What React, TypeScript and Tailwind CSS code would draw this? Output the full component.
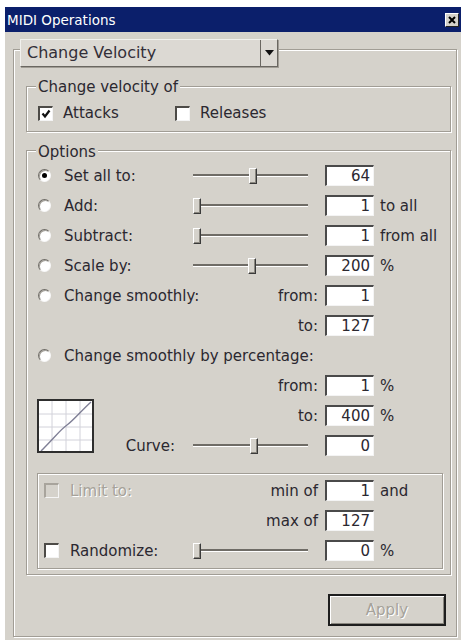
import React from "react";

// Classic Win32-style "MIDI Operations" tool window

const BG = "bg-[#d5d2cb]";

const Radio = ({ on }: { on?: boolean }) => (
  <span className="flex h-[13px] w-[13px] shrink-0 items-center justify-center rounded-full border border-t-[#6e6b65] border-l-[#6e6b65] border-b-[#f7f7f7] border-r-[#f7f7f7] bg-white shadow-[inset_1px_1px_0_#a19e97]">
    {on && <span className="h-[5px] w-[5px] rounded-full bg-black" />}
  </span>
);

const Check = ({ on, disabled }: { on?: boolean; disabled?: boolean }) => (
  <span
    className={
      disabled
        ? "flex h-[15px] w-[15px] shrink-0 items-center justify-center border-t-2 border-l-2 border-b border-r border-t-[#a8a49c] border-l-[#a8a49c] border-b-[#f4f4f4] border-r-[#f4f4f4] bg-[#d5d2cb]"
        : "flex h-[15px] w-[15px] shrink-0 items-center justify-center border-t-2 border-l-2 border-b border-r border-t-[#4d4b47] border-l-[#4d4b47] border-b-[#f4f4f4] border-r-[#f4f4f4] bg-white"
    }
  >
    {on && (
      <svg width="10" height="10" viewBox="0 0 10 10">
        <path d="M1.5 4.5 L4 7.5 L8.5 1.5" stroke="#111" strokeWidth="2.2" fill="none" />
      </svg>
    )}
  </span>
);

const Slider = ({ pos }: { pos: number }) => (
  <div className="relative flex h-[16px] w-[115px] shrink-0 items-center">
    <div className="h-[3px] w-full border-t-2 border-b border-t-[#6f6c66] border-b-white bg-[#9d9a93]" />
    {/* thumb */}
    <div
      className="absolute top-0 h-[16px] w-[8px] border border-t-white border-l-white border-r-[#3a3a3a] border-b-[#3a3a3a] bg-[#d5d2cb] shadow-[inset_-1px_-1px_0_#8a877f]"
      style={{ left: pos }}
    />
  </div>
);

const NumBox = ({ v }: { v: string }) => (
  <div className="flex h-[21px] w-[49px] shrink-0 items-center justify-end border-t-2 border-l-2 border-b border-r border-t-[#4a4a4a] border-l-[#4a4a4a] border-b-[#f4f4f4] border-r-[#f4f4f4] bg-white pr-[3px] leading-none">
    {v}
  </div>
);

const groupCls = "border border-[#a19d95] shadow-[inset_1px_1px_0_#fff,1px_1px_0_#fff]";

const SliderRow = ({
  on,
  label,
  pos,
  value,
  suffix,
}: {
  on?: boolean;
  label: string;
  pos: number;
  value: string;
  suffix?: string;
}) => (
  <div className="flex h-[21px] items-center">
    <div className="flex w-[155px] items-center gap-[13px]">
      <Radio on={on} />
      <span>{label}</span>
    </div>
    <Slider pos={pos} />
    <div className="w-[17px]" />
    <NumBox v={value} />
    {suffix && <span className="ml-[6px]">{suffix}</span>}
  </div>
);

const LabelRow = ({
  left,
  label,
  value,
  suffix,
  width = 287,
}: {
  left?: React.ReactNode;
  label: string;
  value: string;
  suffix?: string;
  width?: number;
}) => (
  <div className="flex h-[21px] items-center">
    <div className="flex items-center" style={{ width }}>
      {left}
      <span className="ml-auto pr-[7px]">{label}</span>
    </div>
    <NumBox v={value} />
    {suffix && <span className="ml-[6px]">{suffix}</span>}
  </div>
);

const CurveGraph = () => (
  <svg width="57" height="54" viewBox="0 0 57 54" className="-ml-[1px] -mt-[6px] shrink-0">
    <rect x="0" y="0" width="57" height="54" fill="#fff" />
    {[15, 29, 43].map((x) => (
      <line key={"v" + x} x1={x} y1="2" x2={x} y2="52" stroke="#d2d2da" strokeWidth="1" />
    ))}
    {[15, 28, 41].map((y) => (
      <line key={"h" + y} x1="2" y1={y} x2="55" y2={y} stroke="#d2d2da" strokeWidth="1" />
    ))}
    <path d="M4 52 C 18 38, 24 30, 30 26 S 44 12, 54 3" stroke="#7f7f96" strokeWidth="1.4" fill="none" />
    <rect x="1" y="1" width="55" height="52" fill="none" stroke="#2e2e2e" strokeWidth="2" />
  </svg>
);

export default function App() {
  return (
    <div className="h-[642px] w-[465px] bg-white pl-[5px] pt-[7px] font-[family-name:'DejaVu_Sans',sans-serif] text-[15px] leading-[18px] text-[#2b2830]">
      <div className={`flex h-[633px] w-[456px] flex-col ${BG}`}>
        {/* Title bar */}
        <div className="flex h-[25px] shrink-0 items-center justify-between bg-[#0b1f6b] pl-[2px] pr-[2px]">
          <span className="text-[13.5px] text-white">MIDI Operations</span>
          <span className="flex h-[14px] w-[14px] items-center justify-center border border-t-white border-l-white border-r-[#222] border-b-[#222] bg-[#d5d2cb]">
            <svg width="8" height="8" viewBox="0 0 8 8">
              <path d="M1 1 L7 7 M7 1 L1 7" stroke="#000" strokeWidth="2" />
            </svg>
          </span>
        </div>

        {/* Outer group with operation dropdown */}
        <div className={`ml-[8px] mt-[17px] flex w-[444px] flex-col ${groupCls}`}>
          <div className="-mt-[11px] ml-[6px] flex h-[28px] w-[258px] items-stretch border border-t-[#f2f1ee] border-l-[#f2f1ee] border-r-[#6a6761] border-b-[#6a6761] bg-[#dcd9d3] shadow-[1px_1px_0_#a19d95]">
            <span className="flex flex-1 items-center pl-[6px] text-[16px] text-[#332f38]">Change Velocity</span>
            <span className="flex w-[17px] items-center justify-center border-l border-l-[#6a6761]">
              <svg width="9" height="6" viewBox="0 0 9 6">
                <path d="M0 0 H9 L4.5 5.5 Z" fill="#111" />
              </svg>
            </span>
          </div>

          {/* Change velocity of */}
          <div className={`ml-[12px] mt-[19px] flex w-[425px] flex-col pb-[8px] ${groupCls}`}>
            <span className={`-mt-[9px] ml-[9px] w-fit px-[2px] ${BG}`}>Change velocity of</span>
            <div className="ml-[11px] mt-[7px] flex h-[20px] items-center">
              <div className="flex w-[137px] items-center gap-[10px]">
                <Check on />
                <span>Attacks</span>
              </div>
              <div className="flex items-center gap-[10px]">
                <Check />
                <span>Releases</span>
              </div>
            </div>
          </div>

          {/* Options */}
          <div className={`ml-[12px] mt-[18px] flex w-[425px] flex-col pb-[5px] ${groupCls}`}>
            <span className={`-mt-[8px] ml-[9px] w-fit px-[2px] ${BG}`}>Options</span>

            <div className="ml-[11px] mt-[4px] flex flex-col gap-[9px]">
              <SliderRow on label="Set all to:" pos={56} value="64" />
              <SliderRow label="Add:" pos={0} value="1" suffix="to all" />
              <SliderRow label="Subtract:" pos={0} value="1" suffix="from all" />
              <SliderRow label="Scale by:" pos={55} value="200" suffix="%" />
              <LabelRow
                left={
                  <span className="flex items-center gap-[13px]">
                    <Radio />
                    <span>Change smoothly:</span>
                  </span>
                }
                label="from:"
                value="1"
              />
              <LabelRow label="to:" value="127" />
              <div className="flex h-[21px] items-center gap-[13px]">
                <Radio />
                <span>Change smoothly by percentage:</span>
              </div>
              <LabelRow label="from:" value="1" suffix="%" />
              <div className="flex items-start">
                <CurveGraph />
                <div className="flex flex-col gap-[9px]">
                  <LabelRow label="to:" value="400" suffix="%" width={231} />
                  <div className="flex h-[21px] items-center">
                    <span className="w-[99px] pr-[18px] text-right">Curve:</span>
                    <Slider pos={57} />
                    <div className="w-[17px]" />
                    <NumBox v="0" />
                  </div>
                </div>
              </div>
            </div>

            {/* Limit / randomize */}
            <div className={`ml-[10px] mt-[17px] flex w-[406px] flex-col gap-[9px] pb-[7px] pt-[6px] ${groupCls}`}>
              <LabelRow
                left={
                  <span className="ml-[6px] flex items-center gap-[11px]">
                    <Check disabled />
                    <span className="text-[#a6a29a] [text-shadow:1px_1px_0_#fff]">Limit to:</span>
                  </span>
                }
                label="min of"
                value="1"
                suffix="and"
              />
              <LabelRow label="max of" value="127" />
              <div className="flex h-[21px] items-center">
                <div className="flex w-[155px] items-center gap-[11px] pl-[6px]">
                  <Check />
                  <span>Randomize:</span>
                </div>
                <Slider pos={0} />
                <div className="w-[17px]" />
                <NumBox v="0" />
                <span className="ml-[6px]">%</span>
              </div>
            </div>
          </div>

          {/* Apply */}
          <div className="mb-[10px] mr-[10px] mt-[19px] flex h-[32px] w-[118px] items-center justify-center self-end border-2 border-[#1e1e1e] shadow-[inset_1px_1px_0_#fff,inset_-1px_-1px_0_#8a877f]">
            <span className="text-[#a6a29a] [text-shadow:1px_1px_0_#fff]">Apply</span>
          </div>
        </div>
      </div>
    </div>
  );
}
